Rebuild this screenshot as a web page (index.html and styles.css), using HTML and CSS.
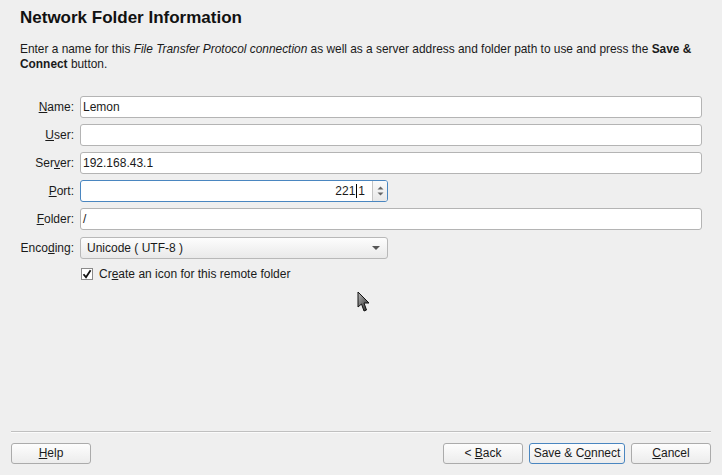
FILE: index.html
```html
<!DOCTYPE html>
<html>
<head>
<meta charset="utf-8">
<link rel="stylesheet" href="styles.css">
</head>
<body>
<div class="page">
  <div class="main">
    <h1 class="title">Network Folder Information</h1>
    <p class="desc">Enter a name for this <i>File Transfer Protocol connection</i> as well as a server address and folder path to use and press the <b>Save &amp; Connect</b> button.</p>
    <div class="form">
      <label class="lbl"><u>N</u>ame:</label>
      <div class="field">Lemon</div>
      <label class="lbl"><u>U</u>ser:</label>
      <div class="field"></div>
      <label class="lbl">Ser<u>v</u>er:</label>
      <div class="field">192.168.43.1</div>
      <label class="lbl"><u>P</u>ort:</label>
      <div class="spin">
        <div class="spin-text">221<span class="caret"></span>1</div>
        <div class="spin-btn">
          <svg width="9" height="14" viewBox="0 0 9 14"><path d="M1.5 5.5 L4.5 2.5 L7.5 5.5 Z" fill="#666"/><path d="M1.5 8.5 L4.5 11.5 L7.5 8.5 Z" fill="#666"/></svg>
        </div>
      </div>
      <label class="lbl"><u>F</u>older:</label>
      <div class="field">/</div>
      <label class="lbl">Enco<u>d</u>ing:</label>
      <div class="combo">
        <span>Unicode ( UTF-8 )</span>
        <svg width="8" height="4" viewBox="0 0 8 4"><path d="M0 0 L8 0 L4 4 Z" fill="#555"/></svg>
      </div>
      <span></span>
      <div class="check-row">
        <span class="checkbox"><svg width="10" height="10" viewBox="0 0 10 10"><path d="M1.5 5.2 L4 8.3 L8.6 1.2" fill="none" stroke="#111" stroke-width="1.8"/></svg></span>
        <span>Cr<u>e</u>ate an icon for this remote folder</span>
      </div>
    </div>
  </div>
  <div class="sep"></div>
  <div class="buttons">
    <div class="btn"><u>H</u>elp</div>
    <div class="spacer"></div>
    <div class="btn">&lt; <u>B</u>ack</div>
    <div class="btn btn-wide btn-default">Save &amp; C<u>o</u>nnect</div>
    <div class="btn"><u>C</u>ancel</div>
  </div>
</div>
<svg class="cursor" width="14" height="22" viewBox="0 0 14 22">
  <defs><linearGradient id="cg" x1="0" y1="0" x2="1" y2="1"><stop offset="0" stop-color="#bbb"/><stop offset="1" stop-color="#222"/></linearGradient></defs>
  <path d="M1 1 L1 16 L4.5 13 L7 20 L9.5 19 L7 12 L12 12 Z" fill="url(#cg)" stroke="#111" stroke-width="1"/>
</svg>
</body>
</html>
```
FILE: styles.css
```css
html, body {
  margin: 0;
  padding: 0;
  background: #efefef;
  font-family: "Liberation Sans", Arial, sans-serif;
  font-size: 12px;
  color: #1a1a1a;
}
.page {
  height: 475px;
  display: flex;
  flex-direction: column;
  box-sizing: border-box;
  padding: 0 11px 11px 11px;
}
.main {
  flex: 1;
  padding: 0 9px;
}
.title {
  margin: 7px 0 0 0;
  font-size: 17px;
  line-height: 22px;
  font-weight: bold;
  color: #111;
}
.desc {
  margin: 13px 0 0 0;
  line-height: 15px;
  font-size: 11.9px;
}
.form {
  margin-top: 24px;
  display: grid;
  grid-template-columns: 54px 622px;
  column-gap: 6px;
  row-gap: 6px;
  align-items: center;
}
.lbl {
  text-align: right;
  white-space: nowrap;
}
.field {
  height: 22px;
  box-sizing: border-box;
  background: #fff;
  border: 1px solid #b4b4b4;
  border-radius: 3px;
  padding: 0 2px;
  line-height: 20px;
}
.spin {
  width: 308px;
  height: 22px;
  box-sizing: border-box;
  background: #fff;
  border: 1px solid #4a86c0;
  border-radius: 3px;
  display: flex;
}
.spin-text {
  flex: 1;
  text-align: right;
  line-height: 20px;
  padding-right: 7px;
}
.caret {
  display: inline-block;
  width: 1px;
  height: 14px;
  background: #000;
  vertical-align: -3px;
  margin: 0 1px;
}
.spin-btn {
  width: 14px;
  border-left: 1px solid #c4c4c4;
  display: flex;
  align-items: center;
  justify-content: center;
  background: linear-gradient(#fafafa, #e8e8e8);
  border-radius: 0 2px 2px 0;
}
.combo {
  width: 308px;
  height: 22px;
  box-sizing: border-box;
  border: 1px solid #b8b8b8;
  border-radius: 3px;
  background: linear-gradient(#fdfdfd, #e9e9e9);
  display: flex;
  align-items: center;
  justify-content: space-between;
  padding: 0 7px 0 6px;
  margin-top: 1px;
}
.check-row {
  display: flex;
  align-items: center;
  gap: 6px;
  margin-top: 2px;
}
.checkbox {
  width: 12px;
  height: 12px;
  box-sizing: border-box;
  border: 1px solid #8a8a8a;
  background: #fff;
  display: flex;
  align-items: center;
  justify-content: center;
  margin-left: 1px;
}
.sep {
  height: 1px;
  background: #c0c0c0;
  border-bottom: 1px solid #fbfbfb;
  margin-bottom: 10px;
}
.buttons {
  display: flex;
  gap: 6px;
}
.spacer {
  flex: 1;
}
.btn {
  width: 80px;
  height: 21px;
  box-sizing: border-box;
  border: 1px solid #ababab;
  border-radius: 3px;
  background: linear-gradient(#fdfdfd, #ececec);
  text-align: center;
  line-height: 19px;
}
.btn-wide {
  width: 96px;
}
.btn-default {
  border-color: #4a86c0;
}
.cursor {
  position: absolute;
  left: 357px;
  top: 291px;
}
```
